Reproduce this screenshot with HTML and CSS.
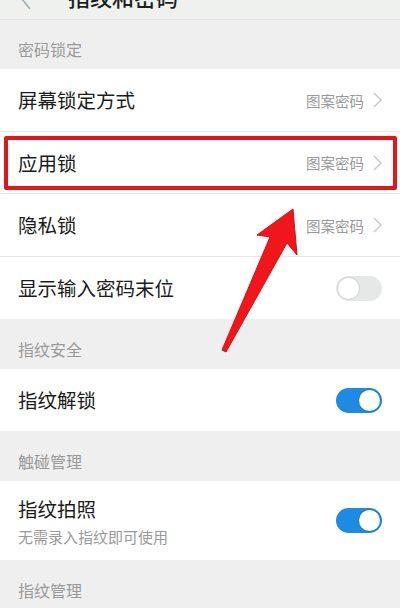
FILE: index.html
```html
<!DOCTYPE html>
<html lang="zh-CN">
<head>
    <meta charset="UTF-8">
    <meta name="viewport" content="width=device-width, initial-scale=1.0">
    <title>指纹和密码</title>
    <link rel="stylesheet" href="styles.css">
</head>
<body>
<div class="page">
    <header class="topbar">
        <svg class="back" width="12" height="24" viewBox="0 0 12 24">
            <polyline points="10,2 2,12 10,22" fill="none" stroke="#9fb0b8" stroke-width="1.6"/>
        </svg>
        <h1>指纹和密码</h1>
    </header>

    <div class="section-title">密码锁定</div>
    <ul class="group">
        <li class="row">
            <span class="label">屏幕锁定方式</span>
            <span class="value">图案密码</span>
            <svg class="chev" width="9" height="16" viewBox="0 0 9 16"><polyline points="1,1 8,8 1,15" fill="none" stroke="#c4c4c4" stroke-width="1.3"/></svg>
        </li>
        <li class="row row-short highlight">
            <span class="label">应用锁</span>
            <span class="value">图案密码</span>
            <svg class="chev" width="9" height="16" viewBox="0 0 9 16"><polyline points="1,1 8,8 1,15" fill="none" stroke="#c4c4c4" stroke-width="1.3"/></svg>
        </li>
        <li class="row">
            <span class="label">隐私锁</span>
            <span class="value">图案密码</span>
            <svg class="chev" width="9" height="16" viewBox="0 0 9 16"><polyline points="1,1 8,8 1,15" fill="none" stroke="#c4c4c4" stroke-width="1.3"/></svg>
        </li>
        <li class="row row-short">
            <span class="label">显示输入密码末位</span>
            <span class="switch"></span>
        </li>
    </ul>

    <div class="section-title">指纹安全</div>
    <ul class="group">
        <li class="row row-short">
            <span class="label">指纹解锁</span>
            <span class="switch on"></span>
        </li>
    </ul>

    <div class="section-title">触碰管理</div>
    <ul class="group">
        <li class="row row-tall">
            <div class="text">
                <span class="label">指纹拍照</span>
                <span class="sub">无需录入指纹即可使用</span>
            </div>
            <span class="switch on"></span>
        </li>
    </ul>

    <div class="section-title">指纹管理</div>

    <!-- red annotation arrow -->
    <svg class="arrow" width="400" height="608" viewBox="0 0 400 608">
        <polygon points="293,209 297,255 287,243 226,352 222,350 270,237 257,235" fill="#f0171c" stroke="#d81015" stroke-width="1" stroke-linejoin="round"/>
    </svg>
</div>
</body>
</html>
```

FILE: styles.css
```css
* {
    box-sizing: border-box;
    margin: 0;
    padding: 0;
}

body {
    font-family: "Noto Sans CJK SC", "Noto Sans", sans-serif;
    background-color: #efefef;
    color: #222;
}

.page {
    position: relative;
    width: 400px;
    height: 608px;
    overflow: hidden;
}

.topbar {
    height: 20px;
    display: flex;
    align-items: flex-end;
    padding: 0 0 12px 20px;
    background-color: #eef1ee;
    border-bottom: 1px solid #dfe2df;
}

.back {
    margin-bottom: -4px;
    flex-shrink: 0;
}

.topbar h1 {
    font-size: 22px;
    font-weight: 500;
    line-height: 22px;
    margin-left: 36px;
    color: #1e1e1e;
}

.section-title {
    height: 50px;
    display: flex;
    align-items: flex-end;
    padding: 0 0 10px 18px;
    font-size: 16px;
    line-height: 20px;
    color: #999;
}

.topbar + .section-title {
    height: 49px;
}

.group {
    list-style: none;
    background-color: #ffffff;
}

.row {
    position: relative;
    height: 63px;
    display: flex;
    align-items: center;
    padding: 0 18px;
    border-bottom: 1px solid #e8e8e8;
}

.row:last-child {
    border-bottom: none;
}

.row-short {
    height: 62px;
}

.row-tall {
    height: 79px;
}

.label {
    flex: 1;
    font-size: 19.5px;
    line-height: 24px;
    color: #1c1c1c;
}

.value {
    font-size: 14.5px;
    color: #999;
    margin-right: 9px;
}

.chev {
    flex-shrink: 0;
}

.highlight::after {
    content: "";
    position: absolute;
    top: 4px;
    bottom: 3px;
    left: 4px;
    right: 3px;
    border: 4px solid #e3161b;
    border-radius: 2px;
}

.text {
    flex: 1;
    display: flex;
    flex-direction: column;
    padding-top: 2px;
}

.sub {
    font-size: 15px;
    line-height: 20px;
    margin-top: 6px;
    color: #999;
}

.switch {
    position: relative;
    width: 46px;
    height: 25px;
    border-radius: 13px;
    background-color: #e6e8e7;
    flex-shrink: 0;
}

.switch::after {
    content: "";
    position: absolute;
    top: 2px;
    left: 2px;
    width: 21px;
    height: 21px;
    border-radius: 50%;
    background-color: #fff;
    box-shadow: 0 0 0 1px #d4d7d6;
}

.switch.on {
    background-color: #1f8ae2;
}

.switch.on::after {
    left: 23px;
    box-shadow: 0 0 0 1px #1a7fd2;
}

.arrow {
    position: absolute;
    top: 0;
    left: 0;
    pointer-events: none;
}
```
